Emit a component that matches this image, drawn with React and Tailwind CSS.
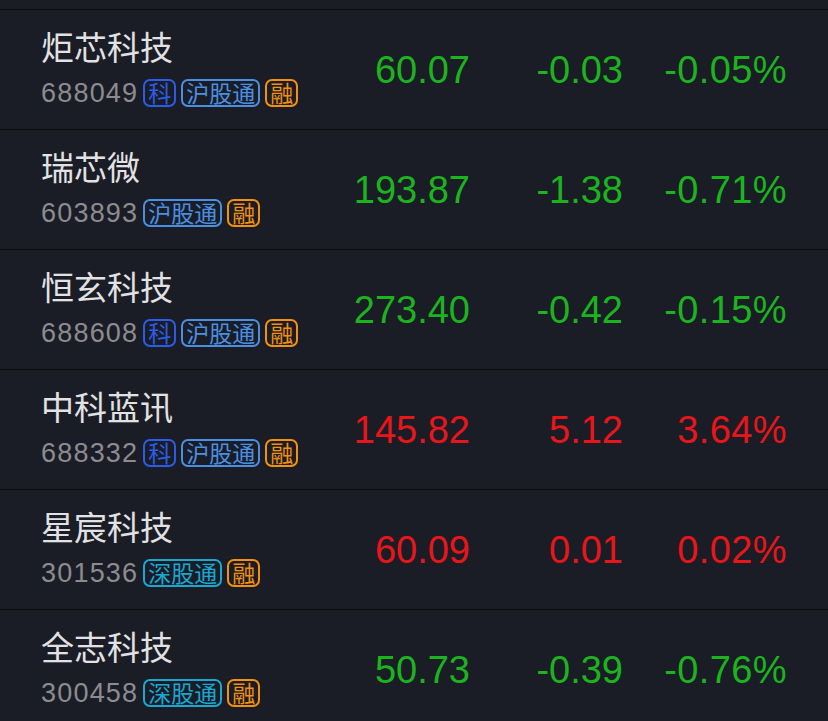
import React from 'react'

const rows = [
  { name: '炬芯科技', code: '688049', tags: ['ke', 'hu', 'rong'], price: '60.07', chg: '-0.03', pct: '-0.05%', up: false },
  { name: '瑞芯微', code: '603893', tags: ['hu', 'rong'], price: '193.87', chg: '-1.38', pct: '-0.71%', up: false },
  { name: '恒玄科技', code: '688608', tags: ['ke', 'hu', 'rong'], price: '273.40', chg: '-0.42', pct: '-0.15%', up: false },
  { name: '中科蓝讯', code: '688332', tags: ['ke', 'hu', 'rong'], price: '145.82', chg: '5.12', pct: '3.64%', up: true },
  { name: '星宸科技', code: '301536', tags: ['shen', 'rong'], price: '60.09', chg: '0.01', pct: '0.02%', up: true },
  { name: '全志科技', code: '300458', tags: ['shen', 'rong'], price: '50.73', chg: '-0.39', pct: '-0.76%', up: false },
]

const tagStyles = {
  ke: { label: '科', cls: 'border-[#2b5ce8] text-[#2b5ce8]' },
  hu: { label: '沪股通', cls: 'border-[#4a90e2] text-[#4a90e2]' },
  shen: { label: '深股通', cls: 'border-[#18a8d2] text-[#18a8d2]' },
  rong: { label: '融', cls: 'border-[#f29110] text-[#f29110]' },
}

const cjk = { fontFamily: '"Noto Sans CJK SC", "Noto Sans", sans-serif' }
const num = { fontFamily: '"Liberation Sans", Arial, sans-serif' }

function Tag({ type }) {
  const t = tagStyles[type]
  return (
    <span
      className={`flex items-center shrink-0 whitespace-nowrap h-[28px] px-[3px] pb-[1px] border-2 rounded-[7px] text-[23px] leading-none ${t.cls}`}
      style={cjk}
    >
      {t.label}
    </span>
  )
}

function Row({ row }) {
  const color = row.up ? 'text-[#e8161a]' : 'text-[#1cb41e]'
  return (
    <div className="flex items-center h-[120px] border-t border-[#0b0c10] shrink-0">
      <div className="flex-1 flex flex-col self-stretch pl-[41px] pt-[16px]">
        <div className="text-[33px] leading-[40px] text-[#e2e2e4] whitespace-nowrap" style={cjk}>
          {row.name}
        </div>
        <div className="flex items-center gap-[5px] mt-[12px]">
          <span className="text-[27px] leading-[30px] tracking-[1.2px] text-[#8c8c90]" style={num}>
            {row.code}
          </span>
          {row.tags.map((t) => (
            <Tag key={t} type={t} />
          ))}
        </div>
      </div>
      <div className={`flex items-center shrink-0 text-[38px] leading-none pr-[41px] ${color}`} style={num}>
        <span className="w-[130px] text-right">{row.price}</span>
        <span className="w-[153px] text-right">{row.chg}</span>
        <span className="w-[164px] text-right tracking-[0.4px]">{row.pct}</span>
      </div>
    </div>
  )
}

export default function App() {
  return (
    <div className="w-[828px] h-[721px] overflow-hidden bg-[#1b1d26] flex flex-col">
      <div className="h-[9px] shrink-0" />
      {rows.map((r) => (
        <Row key={r.code} row={r} />
      ))}
    </div>
  )
}
